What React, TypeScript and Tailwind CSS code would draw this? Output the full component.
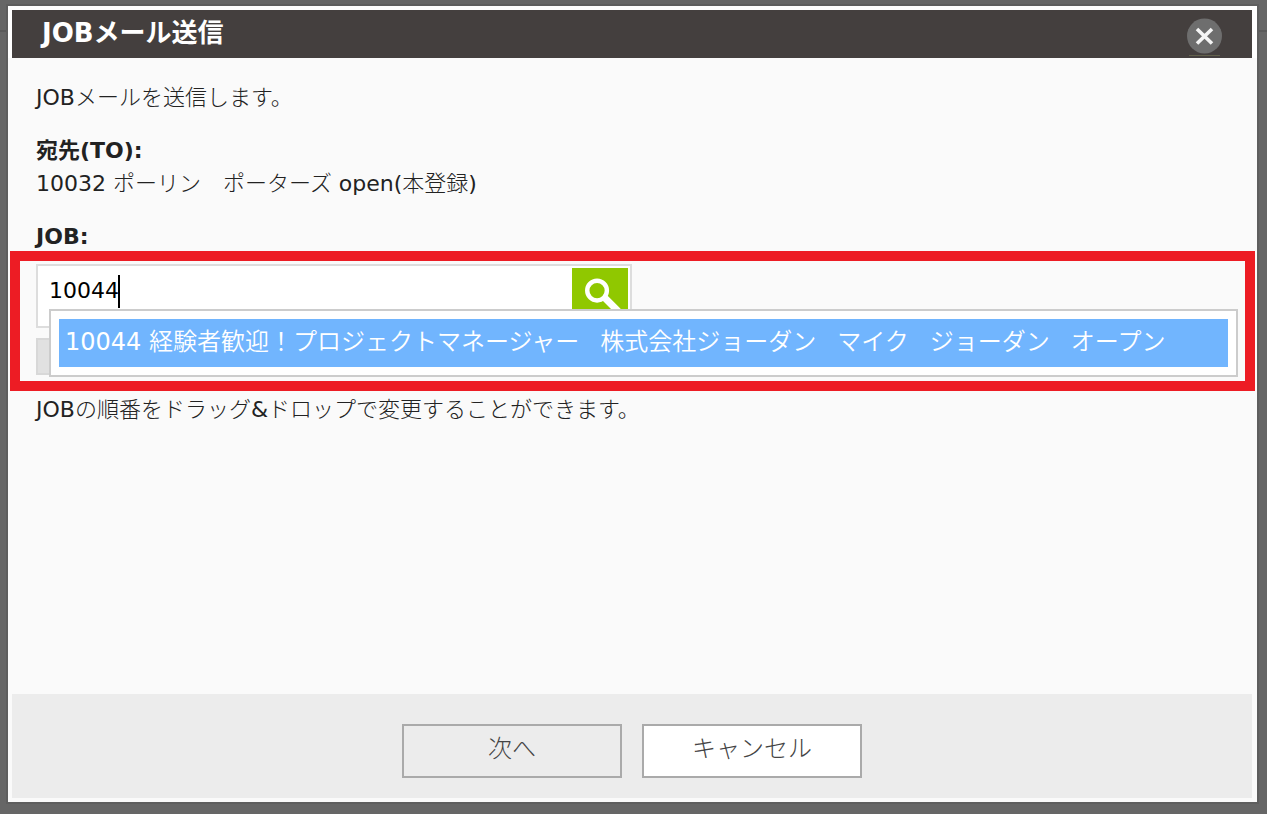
import { Fragment, useState } from "react";

const jobs = [
  {
    id: "10044",
    parts: ["10044 経験者歓迎！プロジェクトマネージャー", "株式会社ジョーダン", "マイク", "ジョーダン", "オープン"],
  },
];

function CloseIcon() {
  return (
    <svg viewBox="0 0 36 40" className="h-10 w-9" aria-hidden="true">
      <circle cx="18.5" cy="18" r="17.5" fill="#6e6e6e" />
      <path d="M11 11 L26 25.5 M26 11 L11 25.5" stroke="#f4f4f4" strokeWidth="3.6" />
      <path d="M3 37.5 H34" stroke="#62614c" strokeWidth="1" />
    </svg>
  );
}

function SearchIcon() {
  return (
    <svg viewBox="0 0 57 57" className="h-full w-full" aria-hidden="true">
      <path d="M33 30 L47 44" stroke="#fff" strokeWidth="7" />
      <circle cx="25.5" cy="23" r="10" fill="none" stroke="#fff" strokeWidth="4.5" />
    </svg>
  );
}

export default function App() {
  const [query, setQuery] = useState("10044");

  return (
    <div className="flex min-h-screen flex-col bg-[#666] bg-[linear-gradient(#5a5a5a,#5a5a5a)] bg-[length:100%_2px] bg-[position:0_30px] bg-no-repeat pt-[6px] pr-[10px] pb-3 pl-2 font-['DejaVu_Sans','Noto_Sans_CJK_JP_Light','Noto_Sans_CJK_JP',sans-serif] text-[22px] leading-8 text-[#222]">
      <div
        role="dialog"
        aria-labelledby="dialog-title"
        className="flex flex-1 flex-col bg-[#fafafa] shadow-[0_0_0_2px_#5e5e5e]"
      >
        <header className="flex h-[52px] items-start justify-between border-4 border-r-[5px] border-b-0 border-white bg-[#443f3e] pr-[30px] pl-[30px]">
          <h1
            id="dialog-title"
            className="pt-[3px] font-['DejaVu_Sans','Noto_Sans_CJK_JP',sans-serif] text-[26px] leading-10 font-bold text-white"
          >
            JOBメール送信
          </h1>
          <button type="button" aria-label="閉じる" className="mt-2">
            <CloseIcon />
          </button>
        </header>

        <main className="flex-1 pt-6">
          <p className="px-7">JOBメールを送信します。</p>

          <h2 className="mt-[21px] px-7 font-['DejaVu_Sans','Noto_Sans_CJK_JP',sans-serif] font-bold">宛先(TO):</h2>
          <p className="mt-[1px] px-7">10032 ポーリン　ポーターズ open(本登録)</p>

          <label htmlFor="job" className="mt-[23px] block px-7 leading-7 font-bold">
            JOB:
          </label>

          {/* JOB picker */}
          <section className="relative mx-[2px] h-[140px] border-[10px] border-[#ed1c24] px-4 pt-[3px]">
            <div className="flex h-16 w-[596px] border-2 border-[#ddd] bg-white">
              <div className="relative min-w-0 flex-1">
                <input
                  id="job"
                  type="text"
                  autoComplete="off"
                  value={query}
                  onChange={(e) => setQuery(e.target.value)}
                  className="h-12 w-full bg-transparent pl-[11px] text-black outline-none"
                />
                <span className="absolute top-[9px] left-[80px] h-[33px] w-[2px] bg-black" />
              </div>
              <button type="button" aria-label="検索" className="mt-[2px] mr-[2px] h-14 w-14 bg-[#90c800]">
                <SearchIcon />
              </button>
            </div>
            <button
              type="button"
              aria-label="追加"
              className="mt-[10px] block h-[37px] w-[120px] border-2 border-[#d8d8d8] bg-[#e1e1e1]"
            />

            {/* Suggestions */}
            <ul className="absolute top-12 right-[7px] left-[29px] border-2 border-[#ccc] bg-white p-2">
              {jobs.map((job) => (
                <li key={job.id}>
                  <button
                    type="button"
                    className="block h-12 w-full bg-[#71b5fe] pb-[2px] pl-[6px] text-left font-['DejaVu_Sans','Noto_Sans_CJK_JP_DemiLight','Noto_Sans_CJK_JP',sans-serif] text-2xl whitespace-nowrap text-white"
                  >
                    {job.parts.map((part, i) => (
                      <Fragment key={i}>
                        {i > 0 && <span className="text-[21px]">　</span>}
                        {part}
                      </Fragment>
                    ))}
                  </button>
                </li>
              ))}
            </ul>
          </section>

          <p className="mt-[3px] px-7">JOBの順番をドラッグ&amp;ドロップで変更することができます。</p>
        </main>

        <footer className="mr-[5px] mb-1 ml-1 flex h-[104px] items-start justify-center gap-5 bg-[#ececec] pt-[30px] text-2xl font-light text-[#444]">
          <button type="button" className="h-[54px] w-[220px] border-2 border-[#aaa] pb-1">
            次へ
          </button>
          <button type="button" className="h-[54px] w-[220px] border-2 border-[#aaa] bg-white pb-1">
            キャンセル
          </button>
        </footer>
      </div>
    </div>
  );
}
